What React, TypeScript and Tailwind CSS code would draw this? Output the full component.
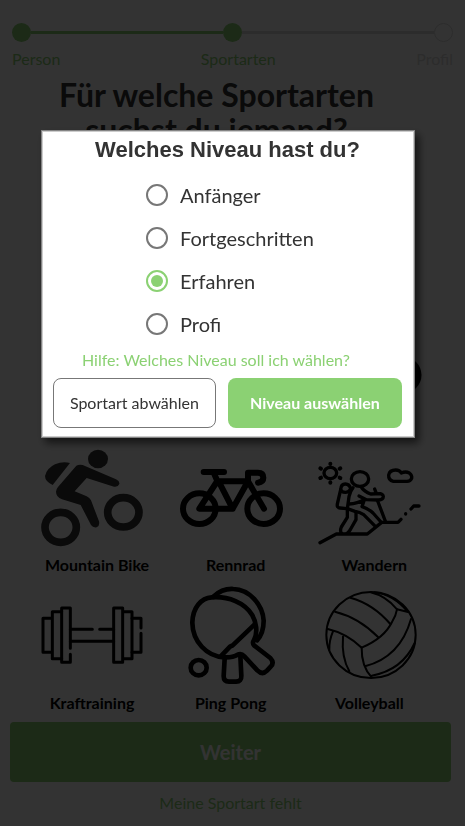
import { useState, type ReactNode } from "react";

const levels = ["Anfänger", "Fortgeschritten", "Erfahren", "Profi"];

function MountainBikeIcon() {
  return (
    <svg viewBox="33 18 306 306" className="size-[102px] text-[#333333]" aria-hidden="true" fill="currentColor">
      <ellipse cx="204" cy="57" rx="30" ry="28" />
      <path d="M120 69 L68 135 Q45 124 45 108 Q50 85 75 73 Q98 63 120 69 Z" />
      <path d="M139 77 Q147 72 158 75 L258 118 Q270 124 268 132 Q264 142 252 140 L170 114 L134 154 L170 169 Q179 173 183 181 L207 244 Q210 258 200 262 Q189 264 183 255 L152 195 L96 178 Q78 171 78 155 Q78 148 84 141 Z" />
      <g fill="none" stroke="currentColor" strokeWidth="23">
        <ellipse cx="92" cy="262" rx="47" ry="45" />
        <ellipse cx="280" cy="217" rx="47" ry="44" />
      </g>
    </svg>
  );
}

function RoadBikeIcon() {
  return (
    <svg viewBox="30 18 306 306" className="size-[102px] overflow-visible" aria-hidden="true" fill="none" stroke="currentColor" strokeWidth="18" strokeLinecap="round" strokeLinejoin="round">
      <ellipse cx="88" cy="206" rx="49" ry="46" />
      <ellipse cx="281" cy="206" rx="49" ry="46" />
      <path d="M101 96 H162" />
      <path d="M132 100 L142 123 L88 206 H188 L146 124 H234 L188 206" />
      <path d="M282 206 L234 124 V98 H264 Q280 98 280 113 Q280 126 264 128" />
    </svg>
  );
}

function HikingIcon() {
  return (
    <svg viewBox="39 18 306 306" className="size-[102px] overflow-visible" aria-hidden="true" fill="none" stroke="currentColor" strokeWidth="10" strokeLinecap="round" strokeLinejoin="round">
      <ellipse cx="76" cy="99" rx="19" ry="17" />
      <path strokeWidth="12" d="M76 71 V72 M76 127 V128 M46 85 L48 86 M104 86 L106 85 M46 114 L48 113 M104 113 L106 114" />
      <path d="M265 124 Q250 121 251 105 Q254 90 272 90 Q284 90 289 99 Q302 93 313 99 Q322 106 320 115 Q316 124 306 124 Z" />
      <ellipse cx="165" cy="117" rx="26" ry="22" />
      <path d="M137 147 Q134 132 121 132 Q108 132 107 149 L97 192 Q95 203 105 204 L126 206" />
      <path d="M107 149 Q109 157 121 157 Q130 157 135 150" />
      <path d="M144 143 Q135 154 132 170 L127 206 L150 214 Q164 216 176 224 L208 256" />
      <path d="M170 143 Q178 154 197 162 L226 161 Q238 165 234 174 Q230 180 220 180 L184 179 L162 168" />
      <path d="M132 192 Q158 190 178 179 L171 200 Q193 208 204 219 L228 246" />
      <path d="M127 208 V232 L109 261 Q104 274 110 280 M153 216 V239 L137 267 Q133 276 126 280" />
      <path d="M209 147 L213 158 M218 183 L242 246" />
      <path d="M45 308 L94 282 H187 L230 247 H279 L288 238 M302 222 V221 M318 207 L326 198 H342" />
    </svg>
  );
}

function DumbbellIcon() {
  return (
    <svg viewBox="33 18 306 306" className="size-[102px]" aria-hidden="true" fill="none" stroke="currentColor" strokeWidth="9" strokeLinecap="round" strokeLinejoin="round">
      <path d="M121 211 V90 H95 V253 H121 V229" />
      <path d="M95 101 H67 V242 H95 M67 121 H39 V223 H67" />
      <path d="M121 154 H187 M209 154 H251 M121 190 H251" />
      <path d="M251 90 H278 V253 H251 Z M278 101 H306 V242 H278" />
      <path d="M306 121 H333 V150 M333 166 V223 H306" />
    </svg>
  );
}

function PingPongIcon() {
  return (
    <svg viewBox="30 18 306 306" className="size-[102px]" aria-hidden="true" fill="none" stroke="currentColor" strokeWidth="14" strokeLinecap="round" strokeLinejoin="round">
      <ellipse cx="86" cy="269" rx="24" ry="23" />
      <path d="M125 58 C94 60 68 88 67 134 C68 190 110 236 163 238 Q188 239 203 230 Q214 225 223 235 L262 277 Q277 292 291 278 L302 266 Q314 254 301 240 L252 202 Q246 195 252 186 C264 164 259 132 246 110 C224 75 176 54 125 58 Z" />
      <path d="M130 56 Q157 31 190 33 C238 34 278 80 281 128 Q281 165 261 187" />
      <path d="M155 232 L180 206 L188 202 L254 139" />
      <path d="M164 241 L161 294 Q161 311 177 311 H198 Q215 310 214 294 L211 232" />
    </svg>
  );
}

function VolleyballIcon() {
  return (
    <svg viewBox="39 18 306 306" className="size-[102px]" aria-hidden="true" fill="none" stroke="currentColor" strokeWidth="6" strokeLinecap="round" strokeLinejoin="round">
      <ellipse cx="198" cy="171" rx="134" ry="129" />
      <path d="M66 152 Q126 166 170 209 Q238 180 261 132 Q273 113 276 94 Q243 54 197 43" />
      <path d="M90 101 Q162 119 219 177 M136 59 Q205 78 256 138" />
      <path d="M208 43 Q263 48 309 102 L276 94" />
      <path d="M170 209 Q169 265 200 298 M180 265 Q286 237 318 123" />
      <path d="M200 293 Q292 276 329 195" />
      <path d="M114 176 Q109 238 133 280 M84 160 Q72 188 73 215" />
    </svg>
  );
}

function BallIcon() {
  return (
    <svg viewBox="0 0 102 102" className="size-[102px] overflow-visible" aria-hidden="true" fill="currentColor">
      <circle cx="85" cy="67" r="18.5" />
    </svg>
  );
}

function Sport({ name, children, wide = false }: { name: string; children: ReactNode; wide?: boolean }) {
  return (
    <button type="button" className={`flex flex-col justify-self-start text-black ${wide ? "w-[112px]" : "w-[102px]"}`}>
      {children}
      <span className="mt-[5px] self-center whitespace-nowrap text-base leading-6 font-bold">{name}</span>
    </button>
  );
}

function Stepper() {
  return (
    <header className="px-3">
      <div className="flex items-center" aria-hidden="true">
        <span className="size-[19px] rounded-full bg-[#8bd173]" />
        <span className="h-[3px] flex-1 bg-[#8bd173]" />
        <span className="size-[19px] rounded-full bg-[#8bd173]" />
        <span className="h-[3px] flex-1 bg-[#dadada]" />
        <span className="size-[19px] rounded-full border border-[#dadada]" />
      </div>
      <ol className="mt-[5px] flex justify-between text-base leading-6 text-[#8bd173]">
        <li>Person</li>
        <li>Sportarten</li>
        <li className="text-[#dadada]">Profil</li>
      </ol>
    </header>
  );
}

function LevelDialog() {
  const [level, setLevel] = useState("Erfahren");
  return (
    <div className="fixed inset-0 flex items-start bg-black/80 pt-[130px] pr-[50px] pl-[41px]">
      <form
        role="dialog"
        aria-labelledby="level-title"
        onSubmit={(event) => event.preventDefault()}
        className="flex-1 border border-[#848484] bg-white pt-1 pr-3 pb-[9px] pl-[11px] text-[#333333] shadow-[inset_0_0_0_1px_#cccccc,4px_5px_8px_rgba(0,0,0,0.6)]"
      >
        <h2 id="level-title" className="text-center font-['Liberation_Sans',sans-serif] text-[22px] leading-[30px] font-bold">
          Welches Niveau hast du?
        </h2>
        <div className="mt-2 pl-[93px]">
          {levels.map((name) => (
            <label key={name} className="flex h-[43px] items-center gap-3 text-xl">
              <input
                type="radio"
                name="level"
                checked={level === name}
                onChange={() => setLevel(name)}
                className="size-[22px] appearance-none rounded-full border-2 border-[#777777] bg-clip-content p-[3px] checked:border-[#8bd173] checked:bg-[#8bd173]"
              />
              {name}
            </label>
          ))}
        </div>
        <a href="#hilfe" className="mt-[3px] ml-[29px] block text-base leading-6 text-[#8bd173]">
          Hilfe: Welches Niveau soll ich wählen?
        </a>
        <div className="mt-[6px] flex gap-3">
          <button type="button" className="h-[50px] flex-12 rounded-lg border border-[#777777] text-base">
            Sportart abwählen
          </button>
          <button type="submit" className="h-[50px] flex-13 rounded-lg bg-[#8bd173] text-base font-bold text-white">
            Niveau auswählen
          </button>
        </div>
      </form>
    </div>
  );
}

export default function App() {
  return (
    <div className="min-h-screen bg-white pt-[23px] font-[Lato,sans-serif]">
      <Stepper />
      <main>
        <h1 className="mx-auto mt-[6px] max-w-[400px] pr-8 text-center text-[32px] leading-[35px] font-bold text-[#333333]">
          Für welche Sportarten suchst du jemand?
        </h1>
        <section className="mt-[161px] pr-2 pl-[41px]">
          <div className="grid h-[138px] grid-cols-3">
            <div className="col-start-3">
              <BallIcon />
            </div>
          </div>
          <div className="grid h-[138px] grid-cols-3">
            <Sport name="Mountain Bike" wide><MountainBikeIcon /></Sport>
            <Sport name="Rennrad" wide><RoadBikeIcon /></Sport>
            <Sport name="Wandern" wide><HikingIcon /></Sport>
          </div>
          <div className="grid h-[138px] grid-cols-3">
            <Sport name="Kraftraining"><DumbbellIcon /></Sport>
            <Sport name="Ping Pong"><PingPongIcon /></Sport>
            <Sport name="Volleyball"><VolleyballIcon /></Sport>
          </div>
        </section>
        <footer className="flex flex-col items-center pr-3.5 pl-2.5">
          <button type="button" className="h-[60px] w-full rounded bg-[#8bd173] text-xl font-bold text-white">
            Weiter
          </button>
          <a href="#fehlt" className="mt-[9px] text-base leading-6 text-[#8bd173]">
            Meine Sportart fehlt
          </a>
        </footer>
      </main>
      <LevelDialog />
    </div>
  );
}
